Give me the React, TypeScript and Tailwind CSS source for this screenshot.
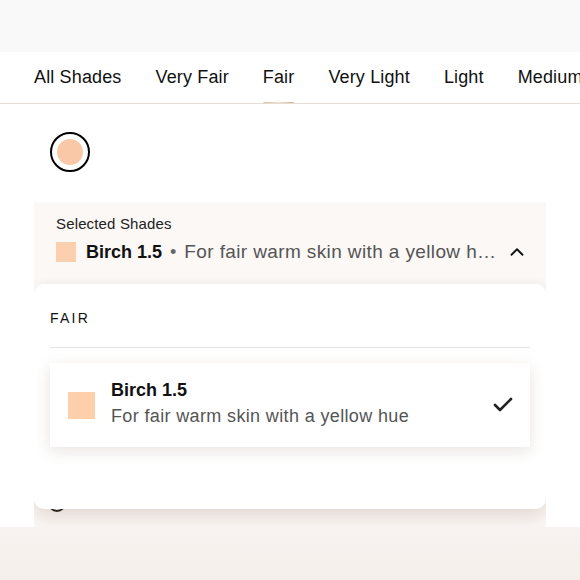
import { Check, ChevronUp } from "lucide-react";

const tabs = ["All Shades", "Very Fair", "Fair", "Very Light", "Light", "Medium", "Tan"];

export default function App() {
  return (
    <div
      className="w-[580px] h-[580px] overflow-hidden bg-white text-[#111]"
      style={{ fontFamily: '"Liberation Sans", Arial, sans-serif' }}
    >
      {/* top strip */}
      <div className="h-[52px] bg-[#faf9f9]" />

      {/* tabs */}
      <div className="h-[52px] bg-white border-b border-[#e6dcd2] flex items-center gap-[34px] pl-[34px] whitespace-nowrap overflow-hidden">
        {tabs.map((t) => (
          <div key={t} className="relative h-full flex items-center text-[18px] tracking-[0.008em] text-[#111]">
            {t}
            {t === "Fair" && (
              <span className="absolute left-0 right-0 bottom-[-2px] h-[3px] rounded-sm bg-gradient-to-r from-[#d9b896] via-[#f3e3d2] to-[#cfae8c]" />
            )}
          </div>
        ))}
      </div>

      <div className="px-[34px]">
        {/* swatch */}
        <div className="mt-[28px] ml-[16px] w-[40px] h-[40px] rounded-full border-2 border-black flex items-center justify-center">
          <div className="w-[26px] h-[26px] rounded-full bg-[#f9c9a7]" />
        </div>

        {/* selected shades panel */}
        <div className="relative mt-[30px] h-[325px] bg-[#fbf8f6] overflow-hidden">
          <div className="h-[82px] pt-[12px] px-[22px]">
            <div className="text-[15px] leading-[20px] tracking-[0.01em] text-[#222]">Selected Shades</div>
            <div className="mt-[6px] h-[24px] flex items-center gap-[10px]">
              <div className="w-[20px] h-[20px] shrink-0 bg-[#fcd0ae]" />
              <div className="flex-1 min-w-0 flex items-center">
                <span className="font-bold shrink-0 text-[18px] text-[#111]">Birch 1.5</span>
                <span className="mx-[8px] text-[#666] shrink-0 text-[18px]">•</span>
                <span className="truncate text-[19px] tracking-[0.02em] text-[#555]">For fair warm skin with a yellow hue</span>
              </div>
              <ChevronUp className="w-[22px] h-[22px] shrink-0 -ml-[1px] -mr-[4px] text-[#111]" strokeWidth={2} />
            </div>
          </div>

          {/* list under dropdown */}
          <div className="pt-[210px] pl-[14px]">
            <div className="w-[18px] h-[18px] rounded-full border-2 border-[#222]" />
          </div>

          {/* dropdown */}
          <div className="absolute left-0 right-0 top-[82px] h-[225px] bg-white rounded-[10px] shadow-[0_10px_18px_rgba(130,90,60,0.16),0_0_12px_rgba(0,0,0,0.04)] px-[16px] pt-[24px]">
            <div className="text-[14px] leading-[20px] tracking-[0.16em] font-medium text-[#111]">FAIR</div>
            <div className="mt-[19px] h-px bg-[#e9e4e1]" />
            <div className="mt-[15px] h-[84px] bg-white shadow-[0_4px_14px_rgba(120,85,60,0.16)] flex items-center pl-[18px] pr-[15px]">
              <div className="w-[27px] h-[27px] shrink-0 bg-[#fdd0ab]" />
              <div className="ml-[16px] flex-1 min-w-0 -mt-[4px]">
                <div className="text-[18px] leading-[26px] font-bold text-[#111]">Birch 1.5</div>
                <div className="text-[18px] leading-[26px] tracking-[0.02em] text-[#555]">For fair warm skin with a yellow hue</div>
              </div>
              <Check className="w-[24px] h-[24px] text-[#222]" strokeWidth={2.6} />
            </div>
          </div>
        </div>
      </div>

      {/* bottom fade */}
      <div className="h-[53px] bg-gradient-to-b from-[#f8f3f0] to-[#f5efeb]" />
    </div>
  );
}
